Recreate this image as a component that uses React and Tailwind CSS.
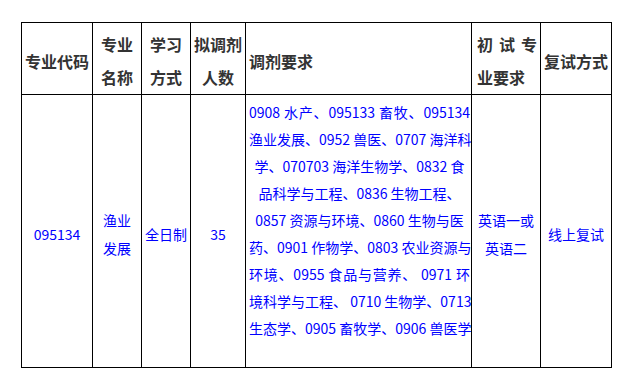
const font = { fontFamily: '"Noto Sans CJK SC", "Noto Sans", sans-serif' }

const lines = [
  { t: '0908 水产、095133 畜牧、095134', a: 'j' },
  { t: '渔业发展、0952 兽医、0707 海洋科', a: 'j' },
  { t: '学、070703 海洋生物学、0832 食', a: 'c' },
  { t: '品科学与工程、0836 生物工程、', a: 'c' },
  { t: '0857 资源与环境、0860 生物与医', a: 'c' },
  { t: '药、0901 作物学、0803 农业资源与', a: 'j' },
  { t: '环境、0955 食品与营养、 0971 环', a: 'j' },
  { t: '境科学与工程、 0710 生物学、0713', a: 'j' },
  { t: '生态学、0905 畜牧学、0906 兽医学', a: 'j' },
]

function Th({ children, className = '' }) {
  return (
    <th className={`border border-black align-middle pt-[5px] pb-0 font-bold text-[16px] leading-[33px] text-[#333] ${className}`}>
      {children}
    </th>
  )
}

function Td({ children, className = '' }) {
  return (
    <td className={`border border-black align-middle pt-[5px] text-center text-[14px] leading-[28px] text-[#0000ff] ${className}`}>
      {children}
    </td>
  )
}

export default function App() {
  return (
    <div className="w-[620px] h-[372px] bg-white pt-[22px] pl-[21px]" style={font}>
      <table className="border-collapse table-fixed w-[590px]">
        <colgroup>
          <col className="w-[71px]" />
          <col className="w-[49px]" />
          <col className="w-[49px]" />
          <col className="w-[55px]" />
          <col className="w-[226px]" />
          <col className="w-[69px]" />
          <col className="w-[71px]" />
        </colgroup>
        <thead>
          <tr className="h-[72px]">
            <Th className="text-center whitespace-nowrap">专业代码</Th>
            <Th className="text-center">专业<br />名称</Th>
            <Th className="text-center">学习<br />方式</Th>
            <Th className="text-center whitespace-nowrap">拟调剂<br />人数</Th>
            <Th className="text-left pl-[3px]">调剂要求</Th>
            <Th className="text-left pl-[5px] pr-[3px]">
              <div className="flex justify-between"><span>初</span><span>试</span><span>专</span></div>
              <div>业要求</div>
            </Th>
            <Th className="text-left pl-[3px] whitespace-nowrap">复试方式</Th>
          </tr>
        </thead>
        <tbody>
          <tr className="h-[271px]">
            <Td>095134</Td>
            <Td>渔业<br />发展</Td>
            <Td className="whitespace-nowrap">全日制</Td>
            <Td>35</Td>
            <td className="border border-black align-top pt-[4px] pl-[3px] pr-[1px] pb-[25px] text-[14px] leading-[27px] text-[#0000ff]">
              {lines.map((l, i) => (
                <div
                  key={i}
                  className={`whitespace-nowrap ${l.a === 'j' ? 'text-justify [text-align-last:justify]' : 'text-center'}`}
                >
                  {l.t}
                </div>
              ))}
            </td>
            <Td className="whitespace-nowrap">英语一或<br />英语二</Td>
            <Td className="whitespace-nowrap">线上复试</Td>
          </tr>
        </tbody>
      </table>
    </div>
  )
}
